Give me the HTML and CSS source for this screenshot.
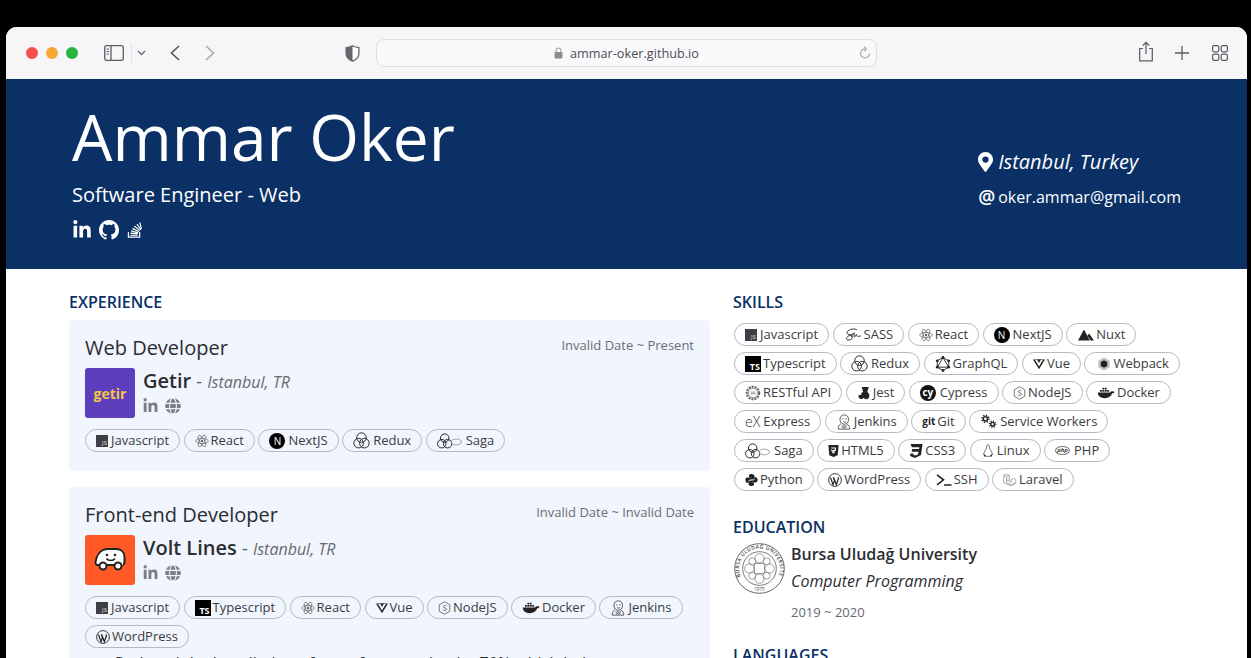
FILE: index.html
```html
<!DOCTYPE html>
<html lang="en">
<head>
<meta charset="utf-8">
<title>Ammar Oker</title>
<link rel="stylesheet" href="styles.css">
</head>
<body>
<svg class="defs" aria-hidden="true">
  <symbol id="i-in" viewBox="0 0 448 512"><path d="M100.28 448H7.4V148.9h92.88zM53.79 108.1C24.09 108.1 0 83.5 0 53.8a53.79 53.79 0 0 1 107.58 0c0 29.7-24.1 54.3-53.79 54.3zM447.9 448h-92.68V302.4c0-34.7-.7-79.2-48.29-79.2-48.29 0-55.69 37.7-55.69 76.7V448h-92.78V148.9h89.08v40.8h1.3c12.4-23.5 42.69-48.3 87.88-48.3 94 0 111.28 61.9 111.28 142.3V448z"/></symbol>
  <symbol id="i-gh" viewBox="0 0 16 16"><path d="M8 0C3.58 0 0 3.58 0 8c0 3.54 2.29 6.53 5.47 7.59.4.07.55-.17.55-.38 0-.19-.01-.82-.01-1.49-2.01.37-2.53-.49-2.69-.94-.09-.23-.48-.94-.82-1.13-.28-.15-.68-.52-.01-.53.63-.01 1.08.58 1.23.82.72 1.21 1.87.87 2.33.66.07-.52.28-.87.51-1.07-1.78-.2-3.64-.89-3.64-3.95 0-.87.31-1.59.82-2.15-.08-.2-.36-1.02.08-2.12 0 0 .67-.21 2.2.82.64-.18 1.32-.27 2-.27.68 0 1.36.09 2 .27 1.53-1.04 2.2-.82 2.2-.82.44 1.1.16 1.92.08 2.12.51.56.82 1.27.82 2.15 0 3.07-1.87 3.75-3.65 3.95.29.25.54.73.54 1.48 0 1.07-.01 1.93-.01 2.2 0 .21.15.46.55.38A8.013 8.013 0 0016 8c0-4.42-3.58-8-8-8z"/></symbol>
  <symbol id="i-so" viewBox="0 0 16 18"><path d="M1.5 11v5.5h12V11" fill="none" stroke="currentColor" stroke-width="1.3"/><path d="M3.5 14.6h7.8M3.7 12.4l7.7.7M4.4 10l7.4 2M5.8 7.3l6.8 3.6M7.8 4.8l5.8 4.9M10.6 2.6l4.2 6.2M13.5 1l1.9 6.6" fill="none" stroke="currentColor" stroke-width="1.3"/></symbol>
  <symbol id="i-pin" viewBox="0 0 384 512"><path d="M172.3 501.7C27 291 0 269.4 0 192 0 86 86 0 192 0s192 86 192 192c0 77.4-27 99-172.3 309.7-9.5 13.8-29.9 13.8-39.4 0zM192 272a80 80 0 1 0 0-160 80 80 0 0 0 0 160z"/></symbol>
  <symbol id="i-globe" viewBox="0 0 16 16"><circle cx="8" cy="8" r="7.8"/><path d="M0 5.4h16M0 10.6h16" stroke="#f1f5fd" stroke-width="1.1"/><ellipse cx="8" cy="8" rx="3.4" ry="8" fill="none" stroke="#f1f5fd" stroke-width="1.1"/></symbol>
  <symbol id="i-react" viewBox="0 0 16 16"><g fill="none" stroke="currentColor" stroke-width=".8"><ellipse cx="8" cy="8" rx="7.2" ry="2.9"/><ellipse cx="8" cy="8" rx="7.2" ry="2.9" transform="rotate(60 8 8)"/><ellipse cx="8" cy="8" rx="7.2" ry="2.9" transform="rotate(120 8 8)"/></g><circle cx="8" cy="8" r="1.4"/></symbol>
  <symbol id="i-redux" viewBox="0 0 16 16"><g fill="none" stroke="currentColor" stroke-width=".9"><circle cx="8" cy="5.300" r="4.500"/><circle cx="5.300" cy="10.500" r="4.500"/><circle cx="10.700" cy="10.500" r="4.500"/></g></symbol>
  <symbol id="i-saga" viewBox="0 0 26 16"><g fill="none" stroke="currentColor" stroke-width="1"><circle cx="8" cy="5" r="4.400"/><circle cx="5" cy="10.800" r="4.400"/><circle cx="11" cy="10.800" r="4.400"/><ellipse cx="20" cy="9" rx="5.400" ry="3" stroke="#9aa0a8"/></g></symbol>
  <symbol id="i-vue" viewBox="0 0 16 14"><path d="M0 1h16L8 14z"/><path d="M2.900 1.800h10.200L8 10.300z" fill="#fff"/><path d="M5.300 1h5.400L8 5.500z"/></symbol>
  <symbol id="i-node" viewBox="0 0 14 16"><path d="M7 .8l6 3.500v7.400l-6 3.500-6-3.500V4.300z" fill="none" stroke="currentColor" stroke-width="1"/><path d="M9.300 5.700C8.500 5 5.500 5 5.500 6.600 5.500 8.300 9.500 7.500 9.500 9.400c0 1.600-3.200 1.600-4.300.7" fill="none" stroke="currentColor" stroke-width="1"/></symbol>
  <symbol id="i-docker" viewBox="0 0 24 16"><path d="M1 8h16.500c.5-1.300 2-2 3-1.400.9-.3 2 0 3 .7-.8 1.400-2 1.800-3.200 1.700C19 13 15.500 15.500 10.500 15.500 4.500 15.500 1.500 13 1 8z"/><path d="M4 4.500h2.500V7H4zM7.200 4.500h2.500V7H7.200zM10.400 4.500h2.500V7h-2.500zM7.200 1.500h2.500V4H7.200zM10.400 1.500h2.500V4h-2.500zM13.600 4.500h2.500V7h-2.500z"/></symbol>
  <symbol id="i-jenkins" viewBox="0 0 16 18"><g fill="none" stroke="currentColor" stroke-width=".8"><path d="M3.500 7C3 3 5.500 1 8.500 1s5 2.500 4.500 6c0 2.500-2 4.500-4.500 4.500C6 11.500 4 10 3.500 7z"/><path d="M6 5.500h1.500M9.500 5.500H11M7 8.500c1 .8 2.500.8 3.500 0M4.500 11c-2 1-3 3-3 6h13c0-2.500-1-4.500-3-5.500"/><path d="M5 13.500h6.500M6 15.500h4.500"/></g></symbol>
  <symbol id="i-wp" viewBox="0 0 16 16"><circle cx="8" cy="8" r="7.300" fill="none" stroke="currentColor" stroke-width="1"/><path d="M2.800 5l3 8.400 1.600-4.700L6.200 5M6.500 5l3 8.400 2.300-6.500c.3-.9 0-1.400-.5-2" fill="none" stroke="currentColor" stroke-width="1.400"/></symbol>
  <symbol id="i-sass" viewBox="0 0 18 14"><path d="M13 2.500C11 .5 5 1.500 3 4.500c-1.500 2.500 5 2.500 5.500 5 .3 2-3 3.500-5 3-1.700-.5-1-3 1-4 3-1.500 5-3 6.500-3M7 9.500c1-1 2-3 3-3s-.5 3 .5 3 1-2 2-2.500c.3 2 1.500 2.500 2.500 1.500 1 .4 1.500 0 2-.5" fill="none" stroke="currentColor" stroke-width=".9"/></symbol>
  <symbol id="i-nuxt" viewBox="0 0 16 12"><path d="M6 .5L11.800 11.500H0zM11 4.500L16 11.500h-3.300L9.500 6.800z"/></symbol>
  <symbol id="i-gql" viewBox="0 0 16 16"><g fill="none" stroke="currentColor" stroke-width=".9"><path d="M8 1.500l5.700 3.300v6.400L8 14.500l-5.700-3.300V4.800zM8 1.500l5.700 9.700H2.300z"/></g><circle cx="8" cy="1.500" r="1.400"/><circle cx="13.700" cy="4.800" r="1.400"/><circle cx="13.700" cy="11.200" r="1.400"/><circle cx="8" cy="14.500" r="1.400"/><circle cx="2.300" cy="11.200" r="1.400"/><circle cx="2.300" cy="4.800" r="1.400"/></symbol>
  <symbol id="i-webpack" viewBox="0 0 14 14"><path d="M7 .6l5.600 3.200v6.400L7 13.400 1.400 10.200V3.800z" fill="#b9bdc4"/><path d="M7 3.200l3.200 1.900v3.800L7 10.800 3.800 8.900V5.100z"/></symbol>
  <symbol id="i-rest" viewBox="0 0 18 18"><g fill="none" stroke="currentColor" stroke-width=".7"><circle cx="9" cy="9" r="5.300"/><circle cx="9" cy="9" r="7" stroke-width="2.400" stroke-dasharray="2.300 1.100"/></g><path d="M6.200 8h5.600M6.200 10h5.600" stroke="currentColor" stroke-width=".8"/></symbol>
  <symbol id="i-jest" viewBox="0 0 14 16"><path d="M4.500 1h8l-1.700 5.500 2 2.500c1 2.500-.3 6-3.300 6-1.300 0-2.300-.5-3-1.200-.8.800-2 1.300-3.300 1-2.300-.4-3.300-3-2-5 .4.500 1 .8 1.700.6.800-.3 1-1.200 1-2.200l2-1.700z"/></symbol>
  <symbol id="i-ssh" viewBox="0 0 16 12"><path d="M1 .8l6.500 5-6.500 5" fill="none" stroke="currentColor" stroke-width="1.600"/><path d="M8 11h7.500" stroke="currentColor" stroke-width="1.500"/></symbol>
  <symbol id="i-cog" viewBox="0 0 20 16"><g fill="none" stroke="currentColor"><circle cx="6" cy="5" r="2.400" stroke-width="1.700"/><circle cx="6" cy="5" r="4" stroke-width="1.500" stroke-dasharray="1.500 1.650"/><circle cx="14" cy="11" r="2" stroke-width="1.600"/><circle cx="14" cy="11" r="3.500" stroke-width="1.400" stroke-dasharray="1.300 1.450"/></g></symbol>
  <symbol id="i-html" viewBox="0 0 12 14"><path d="M0 0h12l-1.100 12L6 14l-4.900-2zM2.800 3l.4 4.400h4.300L7.300 9.400 6 9.900l-1.400-.5-.1-.9" fill-rule="evenodd"/><path d="M3 2.800h6L8.700 7H4.500l-.1-1.300h3L7.500 4H4.200" fill="#fff"/></symbol>
  <symbol id="i-css" viewBox="0 0 14 14"><path d="M1.500 0h12l-1.500 11-6 3-5-2 .5-2.400h3l-.3 1L6 11.500l3-1 .5-2.800H2.600L3.200 5h6.900l.3-1.800H2.900z"/></symbol>
  <symbol id="i-linux" viewBox="0 0 14 18"><g fill="none" stroke="currentColor" stroke-width=".8"><path d="M7 1C5.300 1 5 3 5 5c0 2-3.500 5-3.500 8 0 1.500 1.500 3 5.500 3s5.500-1.500 5.500-3c0-3-3.500-6-3.500-8s-.3-4-2-4z"/></g><path d="M1 13l3 1.500L3 17zM13 13l-3 1.500 1 2.500z"/></symbol>
  <symbol id="i-py" viewBox="0 0 16 16"><path d="M7.800.5C5 .5 5 1.700 5 3v1.500h3V5H3C1.500 5 .5 6 .5 8s1 3.500 2.500 3.500h1.300V9.700c0-1.400 1-2.400 2.500-2.400h3c1.200 0 2-.9 2-2V3C11.300 1.500 10 .5 7.800.5z"/><path d="M8.200 15.500c2.800 0 2.800-1.200 2.800-2.500v-1.500H8V11h5c1.500 0 2.500-1 2.500-3S14.500 4.500 13 4.500h-1.200v1.800c0 1.400-1 2.400-2.500 2.400h-3c-1.200 0-2 .9-2 2V13c0 1.500 1.700 2.500 3.900 2.500z"/></symbol>
  <symbol id="i-lara" viewBox="0 0 18 16"><g fill="none" stroke="#888" stroke-width=".9"><path d="M1 2l3.500 2v7l6 3.500 6-3.500V7.500l-3 -1.700-3 1.700v3.500L4.500 7.500M4.500 4L8 2v7M1 2l3.500-1.500L8 2M1 2v9.500l9.500 4 6-3.500"/></g></symbol>
</svg>

<div class="window">
  <div class="toolbar">
    <span class="light red"></span><span class="light amber"></span><span class="light green"></span>
    <svg class="tb sidebar" viewBox="0 0 20 16"><rect x=".7" y=".7" width="18.600" height="14.600" rx="2" fill="none" stroke="#5c5c60" stroke-width="1.300"/><path d="M7 1v14" stroke="#5c5c60" stroke-width="1.300"/><path d="M2.500 4h2.500M2.500 6.500h2.500M2.500 9h2.500" stroke="#5c5c60"/></svg>
    <span class="tb-divider"></span>
    <svg class="tb chev" viewBox="0 0 9 6"><path d="M1 1l3.500 3.500L8 1" fill="none" stroke="#66666a" stroke-width="1.300"/></svg>
    <svg class="tb back" viewBox="0 0 10 16"><path d="M9 1L1.500 8 9 15" fill="none" stroke="#55555a" stroke-width="1.600"/></svg>
    <svg class="tb fwd" viewBox="0 0 10 16"><path d="M1 1l7.500 7L1 15" fill="none" stroke="#a8a8ac" stroke-width="1.600"/></svg>
    <svg class="tb shield" viewBox="0 0 15 17"><path d="M7.500.8c2 1.200 4 1.700 6.400 1.800v6c0 3.500-2.500 6-6.400 7.600C3.600 14.600 1.100 12.100 1.100 8.600v-6C3.500 2.500 5.500 2 7.500.8z" fill="#fff" stroke="#66666a" stroke-width="1.300"/><path d="M7.500.8C5.500 2 3.500 2.500 1.100 2.600v6c0 3.500 2.500 6 6.400 7.600z" fill="#66666a"/></svg>
    <div class="urlbar">
      <svg class="lock" viewBox="0 0 9 12"><path d="M2 5V3.500a2.500 2.500 0 0 1 5 0V5" fill="none" stroke="#8d8d91" stroke-width="1"/><rect x=".5" y="5" width="8" height="6.500" rx="1" fill="#8d8d91"/></svg>
      <span class="url">ammar-oker.github.io</span>
      <svg class="reload" viewBox="0 0 12 14"><path d="M6 3a4.500 4.500 0 1 0 4.500 4.500" fill="none" stroke="#a2a2a6" stroke-width="1.100"/><path d="M5 .8L7.600 3 5 5.200" fill="none" stroke="#a2a2a6" stroke-width="1.100"/></svg>
    </div>
    <svg class="tb share" viewBox="0 0 16 21"><path d="M5 7.500H1.700v12.300h12.600V7.500H11" fill="none" stroke="#5c5c60" stroke-width="1.200"/><path d="M8 13V1.500M4.800 4.500L8 1.300l3.200 3.200" fill="none" stroke="#5c5c60" stroke-width="1.200"/></svg>
    <svg class="tb plus" viewBox="0 0 14 14"><path d="M7 0v14M0 7h14" stroke="#5c5c60" stroke-width="1.300"/></svg>
    <svg class="tb grid" viewBox="0 0 16 16"><g fill="none" stroke="#5c5c60" stroke-width="1.200"><rect x=".6" y=".6" width="6.200" height="6.200" rx="1.500"/><rect x="9.200" y=".6" width="6.200" height="6.200" rx="1.500"/><rect x=".6" y="9.200" width="6.200" height="6.200" rx="1.500"/><rect x="9.200" y="9.200" width="6.200" height="6.200" rx="1.500"/></g></svg>
  </div>

  <header class="hero">
    <div class="hero-left">
      <h1 class="name">Ammar Oker</h1>
      <div class="role">Software Engineer - Web</div>
      <div class="hero-links">
        <svg class="hl in"><use href="#i-in"/></svg>
        <svg class="hl gh"><use href="#i-gh"/></svg>
        <svg class="hl so"><use href="#i-so"/></svg>
      </div>
    </div>
    <div class="hero-right">
      <div class="place"><svg class="pin"><use href="#i-pin"/></svg>Istanbul, Turkey</div>
      <div class="mail"><span class="at">@</span>oker.ammar@gmail.com</div>
    </div>
  </header>

  <main class="main">
    <section class="col-left">
      <h2 class="section">EXPERIENCE</h2>

      <article class="card">
        <div class="card-head">
          <div class="job">Web Developer</div>
          <div class="date">Invalid Date ~ Present</div>
        </div>
        <div class="company">
          <div class="logo logo-getir">getir</div>
          <div class="co-info">
            <div class="co-line"><b class="co-name">Getir</b> <span class="co-dash">-</span> <i class="co-loc">Istanbul, TR</i></div>
            <div class="co-links"><svg class="cl in"><use href="#i-in"/></svg><svg class="cl gl"><use href="#i-globe"/></svg></div>
          </div>
        </div>
        <div class="chips">
          <span class="chip"><span class="js">JS</span>Javascript</span>
          <span class="chip"><svg class="ic s14 soft"><use href="#i-react"/></svg>React</span>
          <span class="chip"><span class="next">N</span>NextJS</span>
          <span class="chip"><svg class="ic s17"><use href="#i-redux"/></svg>Redux</span>
          <span class="chip"><svg class="ic w25"><use href="#i-saga"/></svg>Saga</span>
        </div>
      </article>

      <article class="card">
        <div class="card-head">
          <div class="job">Front-end Developer</div>
          <div class="date">Invalid Date ~ Invalid Date</div>
        </div>
        <div class="company">
          <div class="logo logo-volt">
            <svg class="van" viewBox="0 0 32 26"><path d="M5 18H3.500C2 18 1.200 16.500 1.500 15 2.500 9 6 2 14 2h8c5 0 8.500 3 8.500 8v5c0 2-1.200 3-3 3" fill="#fff" stroke="#222" stroke-width="2"/><path d="M5 18h22.500" stroke="#222" stroke-width="2"/><rect x="4" y="9" width="25" height="9" fill="#fff"/><path d="M3 18h25" stroke="#222" stroke-width="2"/><circle cx="9" cy="19" r="3.500" fill="#fff" stroke="#222" stroke-width="2"/><circle cx="24" cy="19" r="3.500" fill="#fff" stroke="#222" stroke-width="2"/><circle cx="13" cy="8" r="1.300" fill="#222"/><circle cx="21" cy="8" r="1.300" fill="#222"/><path d="M12.500 11.500c1.500 2.500 7 2.500 8.500 0" fill="none" stroke="#222" stroke-width="1.500"/></svg>
          </div>
          <div class="co-info">
            <div class="co-line"><b class="co-name">Volt Lines</b> <span class="co-dash">-</span> <i class="co-loc">Istanbul, TR</i></div>
            <div class="co-links"><svg class="cl in"><use href="#i-in"/></svg><svg class="cl gl"><use href="#i-globe"/></svg></div>
          </div>
        </div>
        <div class="chips">
          <span class="chip"><span class="js">JS</span>Javascript</span>
          <span class="chip"><span class="ts">TS</span>Typescript</span>
          <span class="chip"><svg class="ic s14 soft"><use href="#i-react"/></svg>React</span>
          <span class="chip"><svg class="ic s12"><use href="#i-vue"/></svg>Vue</span>
          <span class="chip"><svg class="ic s13 soft"><use href="#i-node"/></svg>NodeJS</span>
          <span class="chip"><svg class="ic w18"><use href="#i-docker"/></svg>Docker</span>
          <span class="chip"><svg class="ic s16"><use href="#i-jenkins"/></svg>Jenkins</span>
          <span class="chip"><svg class="ic s14"><use href="#i-wp"/></svg>WordPress</span>
        </div>
        <ul class="duties">
          <li>Reduced the installation of apps for users by the 70% which led to a</li>
        </ul>
      </article>
    </section>

    <aside class="col-right">
      <h2 class="section">SKILLS</h2>
      <div class="chips">
        <span class="chip"><span class="js">JS</span>Javascript</span>
        <span class="chip"><svg class="ic w18"><use href="#i-sass"/></svg>SASS</span>
        <span class="chip"><svg class="ic s14 soft"><use href="#i-react"/></svg>React</span>
        <span class="chip"><span class="next">N</span>NextJS</span>
        <span class="chip"><svg class="ic s16 nudge"><use href="#i-nuxt"/></svg>Nuxt</span>
        <span class="chip"><span class="ts">TS</span>Typescript</span>
        <span class="chip"><svg class="ic s17"><use href="#i-redux"/></svg>Redux</span>
        <span class="chip"><svg class="ic s16"><use href="#i-gql"/></svg>GraphQL</span>
        <span class="chip"><svg class="ic s12"><use href="#i-vue"/></svg>Vue</span>
        <span class="chip"><svg class="ic s14 nudge2"><use href="#i-webpack"/></svg>Webpack</span>
        <span class="chip"><svg class="ic s16 soft"><use href="#i-rest"/></svg>RESTful API</span>
        <span class="chip"><svg class="ic s14"><use href="#i-jest"/></svg>Jest</span>
        <span class="chip"><span class="cy">cy</span>Cypress</span>
        <span class="chip"><svg class="ic s13 soft"><use href="#i-node"/></svg>NodeJS</span>
        <span class="chip"><svg class="ic w18"><use href="#i-docker"/></svg>Docker</span>
        <span class="chip"><span class="ex">eX</span>Express</span>
        <span class="chip"><svg class="ic s16"><use href="#i-jenkins"/></svg>Jenkins</span>
        <span class="chip"><span class="git">git</span>Git</span>
        <span class="chip"><svg class="ic w18"><use href="#i-cog"/></svg>Service Workers</span>
        <span class="chip"><svg class="ic w25"><use href="#i-saga"/></svg>Saga</span>
        <span class="chip"><svg class="ic s11"><use href="#i-html"/></svg>HTML5</span>
        <span class="chip"><svg class="ic s14"><use href="#i-css"/></svg>CSS3</span>
        <span class="chip"><svg class="ic s14"><use href="#i-linux"/></svg>Linux</span>
        <span class="chip"><span class="php">php</span>PHP</span>
        <span class="chip"><svg class="ic s13"><use href="#i-py"/></svg>Python</span>
        <span class="chip"><svg class="ic s14"><use href="#i-wp"/></svg>WordPress</span>
        <span class="chip"><svg class="ic w16"><use href="#i-ssh"/></svg>SSH</span>
        <span class="chip"><svg class="ic s14"><use href="#i-lara"/></svg>Laravel</span>
      </div>

      <h2 class="section edu-title">EDUCATION</h2>
      <div class="edu">
        <svg class="seal" viewBox="0 0 50 50">
          <defs><path id="seal-arc" d="M6.500 33A20 20 0 1 1 43.500 33"/></defs>
          <circle cx="25" cy="25" r="24.300" fill="#fff" stroke="#444" stroke-width=".8"/>
          <circle cx="25" cy="25" r="16.500" fill="none" stroke="#444" stroke-width=".7"/>
          <text class="seal-text"><textPath href="#seal-arc">BURSA ULUDAĞ ÜNİVERSİTESİ</textPath></text>
          <text class="seal-year" x="25" y="47.500">1975</text>
          <g fill="none" stroke="#777" stroke-width=".7">
            <rect x="20" y="20" width="10" height="10"/>
            <circle cx="25" cy="15" r="4.500"/><circle cx="25" cy="35" r="4.500"/><circle cx="15" cy="25" r="4.500"/><circle cx="35" cy="25" r="4.500"/>
            <circle cx="18" cy="18" r="3.500"/><circle cx="32" cy="18" r="3.500"/><circle cx="18" cy="32" r="3.500"/><circle cx="32" cy="32" r="3.500"/>
          </g>
        </svg>
        <div class="edu-info">
          <div class="school">Bursa Uludağ University</div>
          <div class="major">Computer Programming</div>
          <div class="years">2019 ~ 2020</div>
        </div>
      </div>

      <h2 class="section lang-title">LANGUAGES</h2>
    </aside>
  </main>
</div>
</body>
</html>
```

FILE: styles.css
```css
* { box-sizing: border-box; }

html, body { margin: 0; height: 100%; }

body {
  background: #000;
  padding: 27px 4px 0 6px;
  overflow: hidden;
  font-family: "Open Sans", "Noto Sans", sans-serif;
  color: #2b2d31;
}

.defs { display: none; }

.window {
  height: 631px;
  overflow: hidden;
  background: #fff;
  border-radius: 11px 11px 0 0;
}

/* Browser toolbar */
.toolbar {
  height: 52px;
  background: #f6f6f9;
  display: flex;
  align-items: center;
  padding-left: 20px;
}
.light { width: 12px; height: 12px; border-radius: 50%; margin-right: 8px; }
.red { background: #f5504e; }
.amber { background: #f5a733; }
.green { background: #27b53e; }
.tb { display: block; flex: none; }
.sidebar { width: 20px; height: 16px; margin-left: 18px; }
.tb-divider { width: 1px; height: 20px; background: #e2e2e6; margin-left: 7px; }
.chev { width: 9px; height: 6px; margin-left: 5px; }
.back { width: 10px; height: 16px; margin-left: 24px; }
.fwd { width: 10px; height: 16px; margin-left: 25px; }
.shield { width: 15px; height: 17px; margin-left: 130px; }
.urlbar {
  width: 501px;
  height: 28px;
  margin-left: 16px;
  border: 1px solid #dedee2;
  border-radius: 8px;
  background: #f9f9fb;
  display: flex;
  align-items: center;
  padding-left: 177px;
  flex: none;
}
.lock { width: 9px; height: 12px; }
.url { font-size: 12.7px; color: #4d4d52; margin-left: 7px; }
.reload { width: 12px; height: 14px; margin-left: 160px; }
.share { width: 16px; height: 21px; margin-left: 261px; margin-top: -4px; }
.plus { width: 14px; height: 14px; margin-left: 21px; }
.grid { width: 16px; height: 16px; margin-left: 23px; }

/* Header */
.hero {
  height: 190px;
  background: #0a3066;
  color: #fff;
  display: flex;
  justify-content: space-between;
  padding: 14px 66px 0;
}
.name { margin: 0; font-size: 64px; line-height: 87px; font-weight: 400; }
.role { font-size: 20px; line-height: 27px; margin-top: 1px; }
.hero-links { display: flex; align-items: center; gap: 8px; margin-top: 12px; height: 20px; padding-left: 1px; }
.hl { display: block; fill: #fff; color: #fff; }
.hl.in { width: 18px; height: 20px; }
.hl.gh { width: 20px; height: 20px; }
.hl.so { width: 15px; height: 18px; }
.hero-right { padding-top: 55px; }
.place { display: flex; align-items: center; font-size: 20px; line-height: 27px; font-style: italic; font-weight: 500; }
.pin { width: 15px; height: 20px; fill: #fff; margin-right: 5px; }
.mail { display: flex; align-items: center; font-size: 16px; line-height: 22px; margin-top: 11px; font-weight: 500; }
.at { font-size: 19px; margin-right: 3px; font-weight: 600; }

/* Content */
.main { display: flex; gap: 23px; padding: 22px 62px 0 63px; align-items: flex-start; }
.col-left { width: 641px; flex: none; }
.col-right { flex: 1; min-width: 0; }
.section { margin: 0 0 7px; font-size: 16px; line-height: 22px; font-weight: 600; color: #0a3066; }

.card {
  background: #f1f5fd;
  border-radius: 4px;
  padding: 14px 16px 19px;
  margin-bottom: 16px;
}
.card-head { display: flex; justify-content: space-between; align-items: flex-start; height: 34px; }
.job { font-size: 20px; line-height: 27px; color: #2b2d31; }
.date { font-size: 13px; line-height: 22px; color: #6b6e73; }
.company { display: flex; gap: 8px; height: 50px; }
.logo { width: 50px; height: 50px; border-radius: 3px; flex: none; display: flex; align-items: center; justify-content: center; }
.logo-getir { background: #5d3ebc; color: #f5c744; font-weight: 700; font-size: 14px; }
.logo-volt { background: #ff5a26; }
.van { width: 32px; height: 26px; }
.co-line { font-size: 16px; line-height: 26px; color: #55585d; }
.co-name { font-size: 20px; font-weight: 600; color: #2b2d31; }
.co-dash { font-size: 18px; margin: 0 1px; }
.co-loc { font-size: 16px; color: #666a70; }
.co-links { display: flex; align-items: center; gap: 7px; margin-top: 3px; }
.cl { display: block; fill: #7b7e84; }
.cl.in { width: 15px; height: 16px; }
.cl.gl { width: 16px; height: 16px; }

.chips { display: flex; flex-wrap: wrap; gap: 6px 3.5px; }
.card .chips { margin-top: 11px; }
.col-right > .chips { margin-top: 10px; padding-left: 1px; }
.chip {
  display: inline-flex;
  align-items: center;
  gap: 2px;
  height: 23px;
  padding: 0 10px;
  border: 1px solid #b4b8c0;
  border-radius: 12px;
  font-size: 13px;
  line-height: 21px;
  color: #3a3c40;
  white-space: nowrap;
}
.ic { display: block; flex: none; fill: #222; color: #222; }
.ic.soft { fill: #666; color: #666; }
.s11 { width: 11px; height: 12px; }
.s12 { width: 12px; height: 12px; }
.s13 { width: 13px; height: 14px; }
.s14 { width: 14px; height: 14px; }
.s16 { width: 16px; height: 16px; }
.s17 { width: 17px; height: 17px; margin-right: 1px; }
.w16 { width: 16px; height: 12px; }
.w18 { width: 18px; height: 15px; }
.w25 { width: 25px; height: 16px; margin-right: 2px; }
.nudge { margin-left: 1px; }
.nudge2 { margin-left: 2px; }

.js, .ts, .next, .cy, .ex, .git, .php { flex: none; display: flex; }
.js {
  width: 12px; height: 12px; background: #3d3f44; color: #e4e4e4; margin-right: -1px;
  font-size: 6px; line-height: 7px; align-items: flex-end; justify-content: flex-end; padding-right: 1px;
}
.chip .js { margin-right: 1px; }
.ts {
  width: 16px; height: 16px; background: #000; color: #fff;
  font-size: 9px; line-height: 10px; font-weight: 700; align-items: flex-end; justify-content: flex-end; padding-right: 1px;
}
.next {
  width: 16px; height: 16px; border-radius: 50%; background: #000; color: #fff; margin-right: 1px;
  font-size: 10px; line-height: 16px; justify-content: center;
}
.cy {
  width: 16px; height: 16px; border-radius: 50%; background: #111; color: #fff; margin-right: 2px;
  font-size: 10px; line-height: 14px; font-weight: 700; justify-content: center;
}
.ex { font-size: 14px; font-weight: 300; color: #333; margin-right: 1px; }
.git { font-size: 10px; font-weight: 700; color: #222; }
.php {
  width: 15px; height: 9px; border: 1px solid #777; border-radius: 50%; color: #444;
  font-size: 6px; line-height: 7px; font-weight: 700; font-style: italic; justify-content: center; margin-right: 2px;
}

.duties { margin: 3px 0 0; padding-left: 30px; font-size: 16px; line-height: 24px; color: #2b2d31; }

/* Education */
.edu-title { margin-top: 25px; margin-bottom: 5px; }
.edu { display: flex; gap: 6px; padding-left: 1px; }
.seal { width: 51px; height: 51px; flex: none; }
.seal-text { font-size: 5px; font-weight: 600; fill: #444; letter-spacing: .4px; }
.seal-year { font-size: 4.500px; fill: #444; text-anchor: middle; }
.school { font-size: 16px; line-height: 22px; font-weight: 600; }
.major { font-size: 16px; line-height: 22px; font-style: italic; margin-top: 5px; }
.years { font-size: 13px; line-height: 18px; color: #66696e; margin-top: 11px; }
.lang-title { margin-top: 23px; }
```
